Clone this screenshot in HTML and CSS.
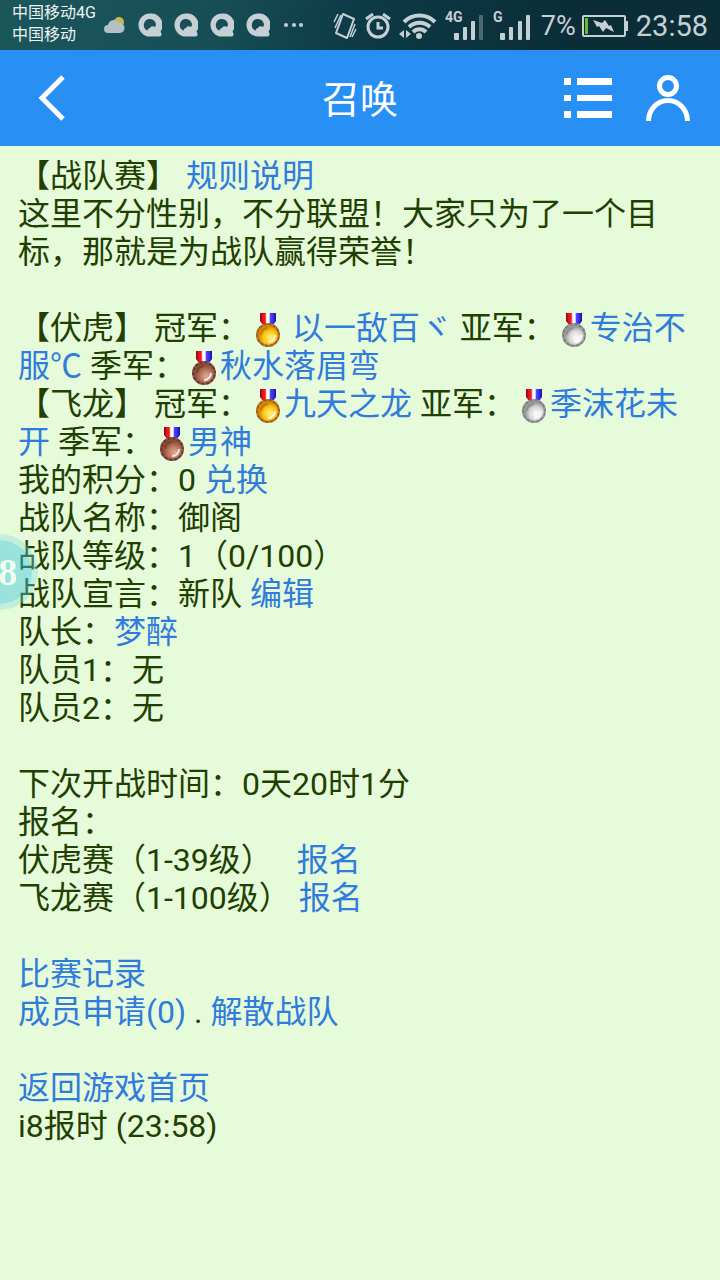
FILE: index.html
```html
<!DOCTYPE html>
<html lang="zh-CN">
<head>
    <meta charset="UTF-8">
    <meta name="viewport" content="width=device-width, initial-scale=1.0">
    <title>召唤</title>
    <link rel="stylesheet" href="styles.css">
</head>
<body>
    <!-- shared shapes -->
    <svg class="defs" aria-hidden="true">
        <defs>
            <linearGradient id="ribbon">
                <stop offset="0" stop-color="#8c0010"/>
                <stop offset="0.2" stop-color="#f01420"/>
                <stop offset="0.32" stop-color="#f01420"/>
                <stop offset="0.42" stop-color="#fff"/>
                <stop offset="0.56" stop-color="#fff"/>
                <stop offset="0.66" stop-color="#4a42fa"/>
                <stop offset="0.8" stop-color="#3a32f4"/>
                <stop offset="1" stop-color="#1c108c"/>
            </linearGradient>
            <radialGradient id="gold" cx="0.6" cy="0.62">
                <stop offset="0" stop-color="#fff27a"/>
                <stop offset="0.6" stop-color="#fcc81c"/>
                <stop offset="1" stop-color="#d88c00"/>
            </radialGradient>
            <radialGradient id="silver" cx="0.6" cy="0.62">
                <stop offset="0" stop-color="#fff"/>
                <stop offset="0.6" stop-color="#d8d8d8"/>
                <stop offset="1" stop-color="#9a9a9a"/>
            </radialGradient>
            <radialGradient id="bronze" cx="0.6" cy="0.65">
                <stop offset="0" stop-color="#e0ac92"/>
                <stop offset="0.6" stop-color="#b4745a"/>
                <stop offset="1" stop-color="#8c4c38"/>
            </radialGradient>
            <symbol id="medal" viewBox="0 0 34 34">
                <path d="M10 0h16v8l-3 4H13l-3-4z" fill="url(#ribbon)" stroke="none"/>
                <circle cx="18" cy="22" r="11" stroke-width="2"/>
                <circle cx="18" cy="22" r="11" fill="none" stroke="#fff" stroke-opacity="0.2" stroke-width="2" stroke-dasharray="2 3"/>
                <path d="M11 22a7 7 0 0 1 7-7" fill="none" stroke-width="2" stroke-opacity="0.5"/>
                <path d="M25 22a7 7 0 0 1-7 7" fill="none" stroke="#fff" stroke-width="2" stroke-opacity="0.8"/>
            </symbol>
            <symbol id="browser" viewBox="0 0 24 24">
                <path fill-rule="evenodd" d="M12 0.500a11.500 11.500 0 0 0 0 23h9.500c2.500 0 2.500-3 1-5A11.500 11.500 0 0 0 12 0.500zM12 6a6 6 0 0 1 6 6l-1 2c-2-1.500-4-1-5 1-1.500 0-2 1-2.500 2.500A6 6 0 0 1 12 6z"/>
            </symbol>
        </defs>
    </svg>

    <div class="status-bar">
        <div class="carriers">
            <span>中国移动4G</span>
            <span>中国移动</span>
        </div>
        <div class="notices">
            <svg width="22" height="18" viewBox="0 0 22 18" aria-hidden="true">
                <circle cx="15" cy="6" r="5" fill="#c8b84c"/>
                <path d="M4 17a4 4 0 0 1 0-8 6 6 0 0 1 11-2 5 5 0 0 1 1 10z" fill="#b4c2c6"/>
            </svg>
            <svg width="24" height="24" aria-hidden="true"><use href="#browser"/></svg>
            <svg width="24" height="24" aria-hidden="true"><use href="#browser"/></svg>
            <svg width="24" height="24" aria-hidden="true"><use href="#browser"/></svg>
            <svg width="24" height="24" aria-hidden="true"><use href="#browser"/></svg>
            <svg width="24" height="24" viewBox="0 0 24 24" aria-hidden="true">
                <circle cx="4" cy="12" r="2"/><circle cx="12" cy="12" r="2"/><circle cx="19" cy="12" r="2"/>
            </svg>
        </div>
        <div class="system">
            <!-- vibrate -->
            <svg width="24" height="26" viewBox="0 0 24 26" fill="none" stroke="#c6d0d4" aria-hidden="true">
                <path d="M10 1l11 5-7 19-11-5z" stroke-width="2" stroke-linejoin="round"/>
                <path d="M5 1L1 9M8 2L2 15M19 24l4-8M17 24l5-13" stroke-width="1.500"/>
            </svg>
            <!-- alarm -->
            <svg width="26" height="26" viewBox="0 0 26 26" fill="none" stroke="#c6d0d4" stroke-width="3" aria-hidden="true">
                <circle cx="13" cy="14" r="10"/>
                <path d="M13 9v6h5"/>
                <path d="M1 6l7-5M25 6l-7-5"/>
            </svg>
            <!-- wifi -->
            <svg width="38" height="26" viewBox="0 0 38 26" fill="none" stroke="#c6d0d4" stroke-width="4" aria-hidden="true">
                <path d="M5 9a22 22 0 0 1 31 0M10 14a15 15 0 0 1 21 0M14 19a9 9 0 0 1 13 0"/>
                <circle cx="20" cy="23" r="3" fill="#c6d0d4" stroke="none"/>
                <path d="M5 17v8l-5-4zM7 17v8l5-4z" fill="#c6d0d4" stroke="none"/>
            </svg>
            <svg class="signal" width="40" height="32" viewBox="0 0 40 32" aria-hidden="true">
                <text x="0" y="12">4G</text>
                <rect x="9" y="23" width="5" height="7" rx="1"/>
                <rect x="18" y="17" width="4" height="13" rx="1"/>
                <rect x="26" y="11" width="4" height="19" rx="1"/>
                <rect x="34" y="5" width="4" height="25" rx="1" opacity="0.35"/>
            </svg>
            <svg class="signal" width="40" height="32" viewBox="0 0 40 32" aria-hidden="true">
                <text x="0" y="12">G</text>
                <rect x="7" y="23" width="5" height="7" rx="1"/>
                <rect x="16" y="17" width="4" height="13" rx="1"/>
                <rect x="25" y="11" width="4" height="19" rx="1"/>
                <rect x="33" y="5" width="4" height="25" rx="1"/>
            </svg>
            <span class="battery">
                7%
                <svg width="46" height="24" viewBox="0 0 46 24" aria-hidden="true">
                    <rect x="1" y="2" width="42" height="20" rx="1" fill="none" stroke="#c6d0d4" stroke-width="2"/>
                    <rect x="43" y="7" width="3" height="10"/>
                    <rect x="3" y="4" width="3" height="16" fill="#6ab82c"/>
                    <path d="M11 6l9 3 3-3 4 6 2-1 3 7-8-4-3 4-4-6-2 1z"/>
                </svg>
            </span>
            <span>23:58</span>
        </div>
    </div>

    <header class="title-bar">
        <a class="icon-link" href="#" aria-label="返回">
            <svg width="44" height="48" viewBox="0 0 44 48" fill="none" stroke="#fff" stroke-width="5">
                <path d="M35 3L14 24l21 21"/>
            </svg>
        </a>
        <h1>召唤</h1>
        <div class="actions">
            <a class="icon-link" href="#" aria-label="菜单">
                <svg width="48" height="48" viewBox="0 0 48 48" fill="#fff">
                    <path d="M0 4h7v7H0zM13 4h35v7H13zM0 21h7v6H0zM13 21h35v6H13zM0 37h7v7H0zM13 37h35v7H13z"/>
                </svg>
            </a>
            <a class="icon-link" href="#" aria-label="我的">
                <svg width="48" height="48" viewBox="0 0 48 48" fill="none" stroke="#fff" stroke-width="5">
                    <circle cx="24" cy="12" r="8.500"/>
                    <path d="M4.500 47a19.500 20.500 0 0 1 39 0"/>
                </svg>
            </a>
        </div>
    </header>

    <main class="content">
        <p>【战队赛】 <a href="#">规则说明</a></p>
        <p>这里不分性别，不分联盟！大家只为了一个目标，那就是为战队赢得荣誉！</p>

        <section class="block">
            <p>【伏虎】 冠军：<svg class="medal gold" role="img" aria-label="金牌"><use href="#medal"/></svg> <a href="#">以一敌百ヾ</a> 亚军：<svg class="medal silver" role="img" aria-label="银牌"><use href="#medal"/></svg><a href="#">专治不服℃</a> 季军：<svg class="medal bronze" role="img" aria-label="铜牌"><use href="#medal"/></svg><a href="#">秋水落眉弯</a></p>
            <p>【飞龙】 冠军：<svg class="medal gold" role="img" aria-label="金牌"><use href="#medal"/></svg><a href="#">九天之龙</a> 亚军：<svg class="medal silver" role="img" aria-label="银牌"><use href="#medal"/></svg><a href="#">季沫花未开</a> 季军：<svg class="medal bronze" role="img" aria-label="铜牌"><use href="#medal"/></svg><a href="#">男神</a></p>
            <p>我的积分：0 <a href="#">兑换</a></p>
            <p>战队名称：御阁</p>
            <p>战队等级：1（0/100）</p>
            <p>战队宣言：新队 <a href="#">编辑</a></p>
            <p>队长：<a href="#">梦醉</a></p>
            <p>队员1：无</p>
            <p>队员2：无</p>
        </section>

        <section class="block">
            <p>下次开战时间：0天20时1分</p>
            <p>报名：</p>
            <p>伏虎赛（1-39级）&nbsp;&nbsp; <a href="#">报名</a></p>
            <p>飞龙赛（1-100级） <a href="#">报名</a></p>
        </section>

        <section class="block">
            <p><a href="#">比赛记录</a></p>
            <p><a href="#">成员申请(0)</a> . <a href="#">解散战队</a></p>
        </section>

        <section class="block">
            <p><a href="#">返回游戏首页</a></p>
            <p>i8报时 (23:58)</p>
        </section>
    </main>

    <button class="float-ball" type="button">8</button>
</body>
</html>
```
FILE: styles.css
```css
* {
    box-sizing: border-box;
}
body {
    margin: 0;
    min-height: 100vh;
    background-color: #e6fbda;
    color: #1f4000;
    font-family: Roboto, "Noto Sans CJK SC", sans-serif;
    font-size: 32px;
    line-height: 38px;
    text-spacing-trim: space-all;
}
a {
    color: #307cdc;
    text-decoration: none;
}
svg {
    flex: none;
}
.defs {
    position: absolute;
    width: 0;
    height: 0;
}

/* status bar */
.status-bar {
    display: flex;
    align-items: center;
    height: 50px;
    padding: 0 12px;
    background: linear-gradient(100deg, #1b565b 0%, #174e56 30%, #0c3a46 50%, #0a2d38 80%);
    color: #c6d0d4;
    fill: #c6d0d4;
}
.carriers {
    display: flex;
    flex-direction: column;
    padding-bottom: 2px;
    color: #eef4f4;
    font-size: 16px;
    line-height: 22px;
    white-space: nowrap;
}
.notices {
    display: flex;
    align-items: center;
    gap: 12px;
    margin-left: 8px;
}
.system {
    display: flex;
    align-items: center;
    gap: 8px;
    margin-left: auto;
    padding-top: 2px;
    font-size: 29px;
    line-height: 48px;
}
.signal {
    font-size: 14px;
    font-weight: bold;
}
.battery {
    display: flex;
    align-items: center;
    gap: 6px;
    font-size: 27px;
}

/* title bar */
.title-bar {
    display: grid;
    grid-template-columns: 1fr auto 1fr;
    align-items: center;
    height: 96px;
    padding: 0 28px;
    background-color: #2890f5;
    color: #fff;
}
.title-bar h1 {
    margin: 0;
    padding-top: 4px;
    font-size: 38px;
    font-weight: normal;
    line-height: 92px;
}
.actions {
    display: flex;
    justify-content: flex-end;
    gap: 32px;
}
.icon-link {
    display: flex;
}

/* page text */
.content {
    padding: 11px 18px;
}
.content p {
    margin: 0;
}
.block {
    margin-top: 38px;
}
.medal {
    width: 34px;
    height: 34px;
    vertical-align: -8px;
}
.gold {
    fill: url(#gold);
    stroke: #a45c10;
}
.silver {
    fill: url(#silver);
    stroke: #808080;
}
.bronze {
    fill: url(#bronze);
    stroke: #6c3426;
}

/* floating ball, half hidden behind the left edge */
.float-ball {
    position: fixed;
    top: 534px;
    left: -38px;
    width: 76px;
    height: 76px;
    padding: 0 0 0 16px;
    border: 6px solid rgba(120, 220, 220, 0.35);
    border-radius: 50%;
    background-color: rgba(60, 196, 226, 0.45);
    background-clip: padding-box;
    color: #f0fcec;
    font-family: "Liberation Serif", serif;
    font-size: 38px;
    font-weight: bold;
    line-height: 64px;
    text-align: center;
}
```
